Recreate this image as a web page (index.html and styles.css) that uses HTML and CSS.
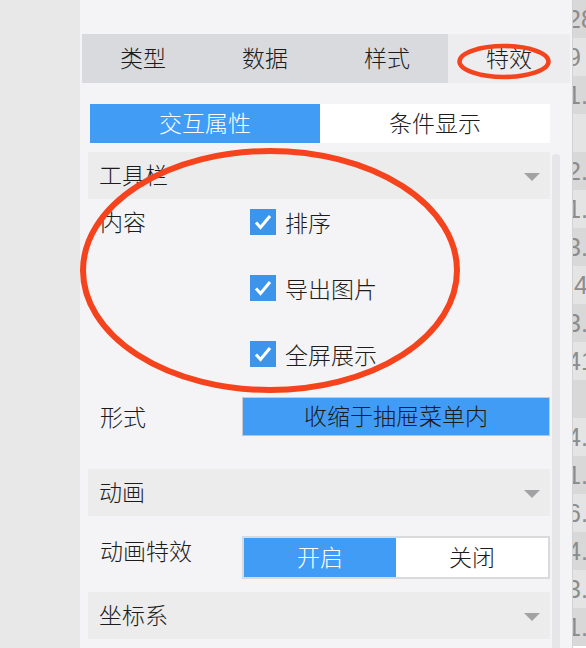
FILE: index.html
```html
<html>
    <head>
        <meta charset="UTF-8">
        <title>特效</title>
        <link rel="stylesheet" href="styles.css">
    </head>
    <body>
        <div class="page">
            <div class="side"></div>
            <div class="panel">
                <div class="tabs">
                    <div class="tab">类型</div>
                    <div class="tab">数据</div>
                    <div class="tab">样式</div>
                    <div class="tab active">特效</div>
                </div>
                <div class="subtabs">
                    <div class="subtab on">交互属性</div>
                    <div class="subtab">条件显示</div>
                </div>
                <div class="scroll">
                    <div class="list">
                        <div class="head">工具栏<span class="caret"></span></div>
                        <div class="row checks-row">
                            <div class="label">内容</div>
                            <div class="checks">
                                <div class="check"><span class="box"><svg width="26" height="26" viewBox="0 0 26 26"><path d="M6 13.5 L10.5 18.5 L20 7" fill="none" stroke="#fff" stroke-width="3"/></svg></span>排序</div>
                                <div class="check"><span class="box"><svg width="26" height="26" viewBox="0 0 26 26"><path d="M6 13.5 L10.5 18.5 L20 7" fill="none" stroke="#fff" stroke-width="3"/></svg></span>导出图片</div>
                                <div class="check"><span class="box"><svg width="26" height="26" viewBox="0 0 26 26"><path d="M6 13.5 L10.5 18.5 L20 7" fill="none" stroke="#fff" stroke-width="3"/></svg></span>全屏展示</div>
                            </div>
                        </div>
                        <div class="row form-row">
                            <div class="label">形式</div>
                            <div class="btn">收缩于抽屉菜单内</div>
                        </div>
                        <div class="head spaced">动画<span class="caret"></span></div>
                        <div class="row anim-row">
                            <div class="label">动画特效</div>
                            <div class="toggle">
                                <div class="opt on">开启</div>
                                <div class="opt">关闭</div>
                            </div>
                        </div>
                        <div class="head">坐标系<span class="caret"></span></div>
                    </div>
                    <div class="bar"></div>
                </div>
            </div>
            <div class="cells">
                <div class="cell">28</div>
                <div class="cell">9</div>
                <div class="cell">1.</div>
                <div class="cell"></div>
                <div class="cell">2.</div>
                <div class="cell">1.</div>
                <div class="cell">3.</div>
                <div class="cell">&nbsp;4</div>
                <div class="cell">3.</div>
                <div class="cell">41</div>
                <div class="cell"></div>
                <div class="cell">4.</div>
                <div class="cell">1.</div>
                <div class="cell">6.</div>
                <div class="cell">4.</div>
                <div class="cell">3.</div>
                <div class="cell">1.</div>
            </div>
        </div>
        <svg class="marks" width="586" height="648" viewBox="0 0 586 648">
            <ellipse cx="504" cy="61.5" rx="44.5" ry="15.5" fill="none" stroke="#f5431d" stroke-width="4.5"/>
            <ellipse cx="270" cy="270.5" rx="187" ry="119.5" fill="none" stroke="#f5431d" stroke-width="6"/>
        </svg>
    </body>
</html>
```

FILE: styles.css
```css
* {
    box-sizing: border-box;
}
body {
    margin: 0;
    font-family: "Noto Sans CJK SC", "Liberation Sans", sans-serif;
    font-size: 23px;
    font-weight: 300;
    line-height: 1;
    color: #1c1c1c;
    overflow: hidden;
}
.page {
    display: flex;
    width: 586px;
    height: 648px;
    overflow: hidden;
}
.side {
    width: 80px;
    background: #e8e8e8;
    flex-shrink: 0;
}
.panel {
    width: 492px;
    flex-shrink: 0;
    background: #f4f4f6;
    padding-top: 34px;
}
.tabs {
    display: flex;
    margin: 0 2px;
    height: 49px;
}
.tab {
    flex: 1;
    display: flex;
    align-items: center;
    justify-content: center;
    padding-bottom: 2px;
    background: #d9dadd;
}
.tab.active {
    background: #ededf0;
}
.subtabs {
    display: flex;
    margin: 21px 22px 0 10px;
    height: 39px;
}
.subtab {
    flex: 1;
    display: flex;
    align-items: center;
    justify-content: center;
    padding-bottom: 2px;
    background: #fff;
}
.subtab.on {
    background: #419cf6;
    color: #fff;
}
.scroll {
    display: flex;
    gap: 2px;
    margin: 9px 0 0 8px;
}
.list {
    width: 462px;
}
.bar {
    width: 8px;
    height: 500px;
    margin-top: 2px;
    border-radius: 4px;
    background: #e6e6e8;
}
.head {
    height: 47px;
    display: flex;
    align-items: center;
    justify-content: space-between;
    padding: 0 10px 2px 11px;
    background: #ececed;
}
.head.spaced {
    margin-top: 33px;
}
.caret {
    width: 0;
    height: 0;
    border-left: 8px solid transparent;
    border-right: 8px solid transparent;
    border-top: 8px solid #a2a2a4;
    margin-top: 4px;
}
.row {
    display: flex;
}
.label {
    width: 154px;
    flex-shrink: 0;
    padding-left: 12px;
}
.checks-row {
    padding-top: 10px;
    height: 198px;
}
.checks-row .label {
    line-height: 24px;
}
.checks {
    display: flex;
    flex-direction: column;
    gap: 40px;
    padding-left: 8px;
}
.check {
    display: flex;
    align-items: center;
    gap: 9px;
    height: 26px;
}
.box {
    width: 26px;
    height: 26px;
    background: #3d95eb;
    display: flex;
}
.form-row {
    align-items: center;
    height: 39px;
}
.btn {
    flex: 1;
    height: 39px;
    display: flex;
    align-items: center;
    justify-content: center;
    padding-bottom: 2px;
    background: #419cf6;
    border: 1px solid #c9cad0;
    border-bottom-color: #a9c4e6;
}
.anim-row {
    height: 76px;
    padding-top: 20px;
}
.anim-row .label {
    padding-top: 3px;
}
.toggle {
    flex: 1;
    height: 43px;
    display: flex;
    border: 2px solid #dadadd;
    background: #fff;
}
.opt {
    flex: 1;
    display: flex;
    align-items: center;
    justify-content: center;
    padding-bottom: 2px;
}
.opt.on {
    background: #419cf6;
    color: #fff;
}
.cells {
    width: 14px;
    flex-shrink: 0;
    overflow: hidden;
    border-left: 1px solid #d2d2d2;
}
.cell {
    height: 38px;
    line-height: 38px;
    font-family: "Liberation Sans", sans-serif;
    font-size: 25px;
    color: #8c8c8c;
    white-space: nowrap;
    text-indent: -6px;
    background: #e4e4e4;
}
.cell:nth-child(odd) {
    background: #d8d8d8;
}
.marks {
    position: absolute;
    top: 0;
    left: 0;
    pointer-events: none;
}
```
